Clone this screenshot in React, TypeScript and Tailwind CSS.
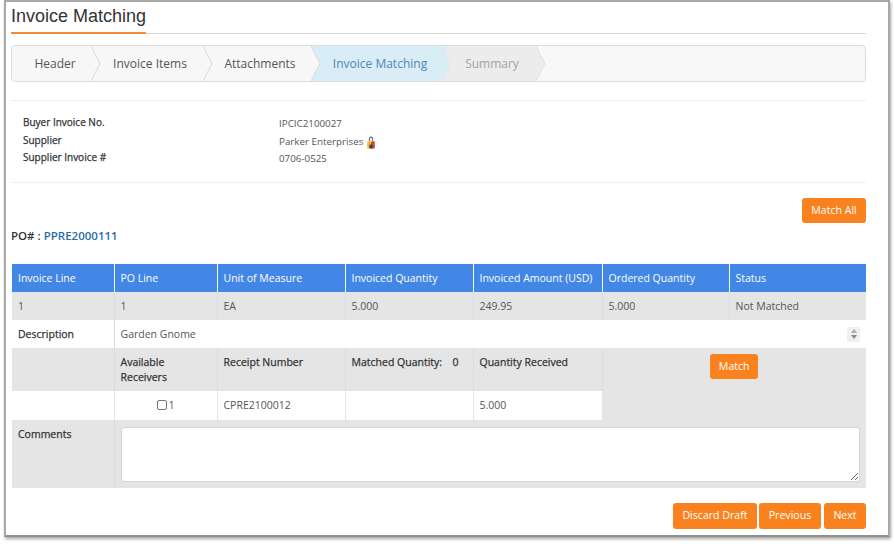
import React from "react";

const steps = [
  { label: "Header", w: "w-[79px]", pl: "pl-[7px]", text: "text-[#555]", bg: "bg-[#f7f7f7]", fill: "#f7f7f7", stroke: "#dcdcdc" },
  { label: "Invoice Items", w: "w-[112px]", pl: "pl-[6px]", text: "text-[#555]", bg: "bg-[#f7f7f7]", fill: "#f7f7f7", stroke: "#dcdcdc" },
  { label: "Attachments", w: "w-[108px]", pl: "pl-[6px]", text: "text-[#555]", bg: "bg-[#f7f7f7]", fill: "#f7f7f7", stroke: "#dcdcdc" },
  { label: "Invoice Matching", w: "w-[132px]", pl: "pl-[6px]", text: "text-[#4d87b3]", bg: "bg-[#d9edf7]", fill: "#d9edf7", stroke: "#e8e8e8" },
  { label: "Summary", w: "w-[93px]", pl: "pl-[5px]", text: "text-[#a3a3a3]", bg: "bg-[#ececec]", fill: "#ececec", stroke: "#e2e2e2" },
];

function Step({ s, z }: { s: (typeof steps)[number]; z: string }) {
  return (
    <div className={`relative ${s.w} ${s.bg} ${z} ${s.pl} flex h-full items-center justify-center text-[12px] ${s.text}`}>
      {s.label}
      <svg className="absolute left-full top-0 h-full w-[10px]" viewBox="0 0 10 34" preserveAspectRatio="none">
        <path d="M0 0 L9 17 L0 34" fill={s.fill} stroke={s.stroke} strokeWidth="1" />
      </svg>
    </div>
  );
}

function Btn({ children, w, h = "h-[26px]" }: { children: React.ReactNode; w: string; h?: string }) {
  return (
    <button className={`${w} ${h} rounded-[3px] bg-[#f9821e] text-[10.6px] text-white`}>{children}</button>
  );
}

const heavy = "font-medium [-webkit-text-stroke:0.25px_#333] text-[#333]";
const th = "border-r border-white px-[6px] pt-[1px] text-left align-middle font-normal";
const td = "border-r border-[#dcdcdc] px-[6px] pt-[1px] align-middle font-normal";
const subh = `border-r border-[#dcdcdc] px-[6px] pt-[7px] align-top text-left ${heavy}`;

export default function App() {
  return (
    <div className="h-[544px] w-[894px] overflow-hidden bg-white font-['Open_Sans','Liberation_Sans',sans-serif] text-[10.5px] text-[#555]">
      <div className="ml-[4px] h-[537px] w-[886px] border-x-2 border-b-2 border-t-2 border-x-[#a8a8a8] border-b-[#8f8f8f] border-t-[#a8a8a8] pl-[5px] pr-[22px] shadow-[1px_2px_3px_rgba(0,0,0,0.35)]">
        <div className="relative h-[32px] border-b border-[#d9d9d9]">
          <h1 className="pt-[3px] font-['Liberation_Sans',sans-serif] text-[18px] leading-[22px] text-[#333]">Invoice Matching</h1>
          <div className="absolute bottom-[-1px] left-0 h-[2px] w-[135px] bg-[#f58b3c]" />
        </div>

        <div className="mt-[11px] flex h-[37px] rounded-[4px] border border-[#dcdcdc] bg-[#f8f8f8]">
          <Step s={steps[0]} z="z-50 rounded-l-[4px]" />
          <Step s={steps[1]} z="z-40" />
          <Step s={steps[2]} z="z-30" />
          <Step s={steps[3]} z="z-20" />
          <Step s={steps[4]} z="z-10" />
        </div>

        <div className="mt-[18px] border-t border-[#f0f0f0] pb-[15px] pl-[12px] pt-[14px] text-[9.8px]">
          <div className="grid grid-cols-[256px_1fr] gap-y-0">
            <div className={`h-[18px] text-[10px] ${heavy}`}>Buyer Invoice No.</div>
            <div className="h-[18px] pt-[2px]">IPCIC2100027</div>
            <div className={`h-[17px] text-[10px] ${heavy}`}>Supplier</div>
            <div className="flex h-[17px] items-center gap-[3px] pt-[1px]">
              Parker Enterprises
              <svg width="10" height="13" viewBox="0 0 9 12">
                <path d="M3 5V2.5a1.5 1.5 0 0 1 3 0V5" fill="none" stroke="#666" strokeWidth="1" />
                <rect x="1" y="5" width="3.5" height="6.5" fill="#f0c020" />
                <rect x="4.5" y="5" width="3.5" height="6.5" fill="#d8452a" />
                <rect x="3" y="8" width="3" height="3.5" fill="#3a3a78" />
              </svg>
            </div>
            <div className={`h-[17px] text-[10px] ${heavy}`}>Supplier Invoice #</div>
            <div className="h-[17px] pt-[2px]">0706-0525</div>
          </div>
        </div>

        <div className="flex justify-end border-t border-[#f0f0f0] pt-[15px]">
          <Btn w="w-[64px]" h="h-[25px]">Match All</Btn>
        </div>

        <div className="mt-[5px] text-[11.5px] font-semibold leading-[16px] text-[#333]">
          PO# : <span className="text-[#2a6ca8]">PPRE2000111</span>
        </div>

        <table className="ml-[1px] mt-[20px] w-[854px] table-fixed border-collapse">
          <colgroup>
            <col className="w-[102px]" />
            <col className="w-[103px]" />
            <col className="w-[128px]" />
            <col className="w-[128px]" />
            <col className="w-[129px]" />
            <col className="w-[127px]" />
            <col className="w-[137px]" />
          </colgroup>
          <tbody>
            <tr className="h-[28px] bg-[#4287e6] text-white">
              <th className={th}>Invoice Line</th>
              <th className={th}>PO Line</th>
              <th className={th}>Unit of Measure</th>
              <th className={th}>Invoiced Quantity</th>
              <th className={th}>Invoiced Amount (USD)</th>
              <th className={th}>Ordered Quantity</th>
              <th className="px-[6px] pt-[1px] text-left font-normal">Status</th>
            </tr>
            <tr className="h-[28px] bg-[#e5e5e5]">
              <td className={td}>1</td>
              <td className={td}>1</td>
              <td className={td}>EA</td>
              <td className={td}>5.000</td>
              <td className={td}>249.95</td>
              <td className={td}>5.000</td>
              <td className="px-[6px] pt-[1px]">Not Matched</td>
            </tr>
            <tr className="h-[28px] bg-white">
              <td className={`border-r border-[#dcdcdc] px-[6px] pt-[1px] ${heavy}`}>Description</td>
              <td colSpan={6} className="pl-[6px] pr-[6px]">
                <div className="flex items-center justify-between">
                  <span className="pt-[1px]">Garden Gnome</span>
                  <div className="flex h-[15px] w-[13px] flex-col items-center justify-center gap-[2px] bg-[#f0f0f0]">
                    <svg width="6" height="4" viewBox="0 0 6 4"><path d="M3 0L6 4H0Z" fill="#aaa" /></svg>
                    <svg width="6" height="4" viewBox="0 0 6 4"><path d="M3 4L6 0H0Z" fill="#888" /></svg>
                  </div>
                </div>
              </td>
            </tr>
            <tr className="h-[43px] bg-[#e5e5e5]">
              <td className={td}></td>
              <td className={`${subh} leading-[15px]`}>Available<br />Receivers</td>
              <td className={subh}>Receipt Number</td>
              <td className={subh}>
                <div className="flex justify-between pr-[8px]"><span>Matched Quantity:</span><span>0</span></div>
              </td>
              <td className={subh}>Quantity Received</td>
              <td colSpan={2} rowSpan={2} className="pt-[6px] text-center align-top">
                <Btn w="w-[48px]" h="h-[25px]">Match</Btn>
              </td>
            </tr>
            <tr className="h-[29px] bg-white">
              <td className="border-r border-[#e5e5e5]"></td>
              <td className="border-r border-[#e5e5e5] text-center">
                <span className="inline-flex items-center gap-[2px]">
                  <span className="h-[10px] w-[10px] rounded-[2px] border border-[#777] bg-white" />
                  <span className="pt-[2px] text-[10px]">1</span>
                </span>
              </td>
              <td className="border-r border-[#e5e5e5] px-[6px]">CPRE2100012</td>
              <td className="border-r border-[#e5e5e5]"></td>
              <td className="border-r border-[#e5e5e5] px-[6px]">5.000</td>
            </tr>
            <tr className="h-[68px] bg-[#e5e5e5]">
              <td className={`border-r border-[#dcdcdc] px-[6px] pt-[7px] align-top ${heavy}`}>Comments</td>
              <td colSpan={6} className="px-[6px] align-middle">
                <textarea className="block h-[55px] w-[739px] rounded-[3px] border border-[#d4d4d4] bg-white" />
              </td>
            </tr>
          </tbody>
        </table>

        <div className="mt-[15px] flex justify-end">
          <Btn w="w-[84px]">Discard Draft</Btn>
          <div className="ml-[2px]"><Btn w="w-[62px]">Previous</Btn></div>
          <div className="ml-[3px]"><Btn w="w-[42px]">Next</Btn></div>
        </div>
      </div>
    </div>
  );
}
